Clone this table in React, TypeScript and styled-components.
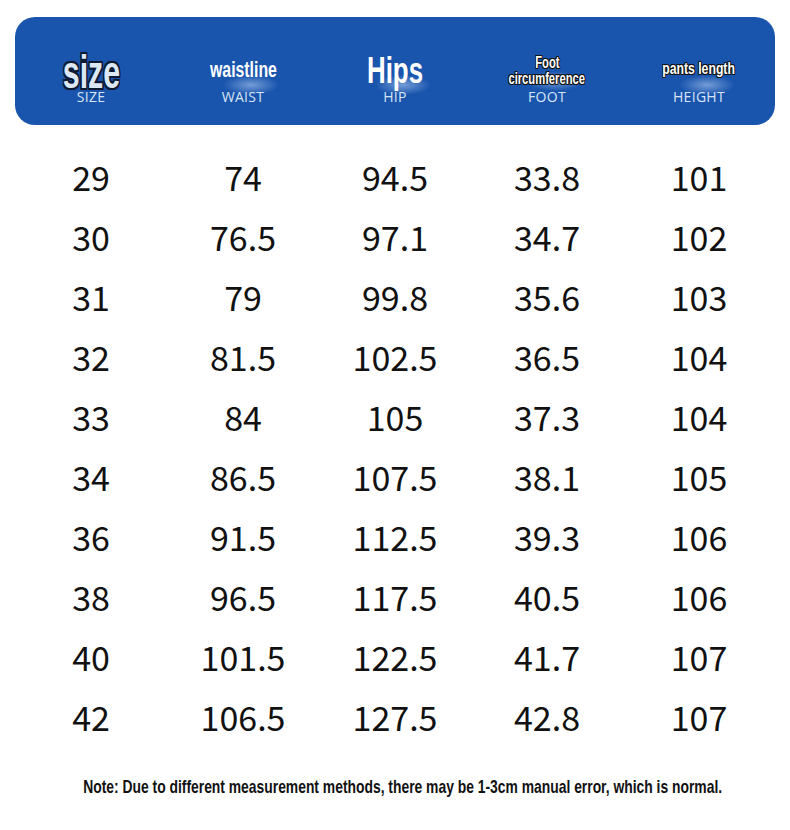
import React from "react";
import styled, { createGlobalStyle } from "styled-components";

const Global = createGlobalStyle`
  html, body { margin: 0; padding: 0; background: #ffffff; overflow: hidden; }
  body { font-family: "Noto Sans CJK SC", "Noto Sans", sans-serif; }
`;

const Page = styled.div`
  width: 790px;
  height: 830px;
  padding: 17px 15px 0;
  box-sizing: border-box;
  display: flex;
  flex-direction: column;
  overflow: hidden;
`;

const Header = styled.div`
  height: 108px;
  border-radius: 20px;
  background: #1a55ad;
  display: grid;
  grid-template-columns: repeat(5, 1fr);
`;

const HeadCell = styled.div`
  position: relative;
  display: flex;
  flex-direction: column;
  align-items: center;
  justify-content: flex-end;
  padding-bottom: 20px;
`;

const Condensed = styled.span<{ $size: number; $outline?: boolean; $mb?: number; $sx?: number }>`
  display: inline-block;
  font-family: "Liberation Sans", sans-serif;
  font-weight: 700;
  font-size: ${(p) => p.$size}px;
  line-height: 1;
  color: #ffffff;
  transform: scaleX(${(p) => p.$sx ?? 0.72});
  white-space: nowrap;
  margin-bottom: ${(p) => p.$mb ?? 0}px;
  text-shadow: ${(p) =>
    p.$outline
      ? "-1px -1px 0 #111, 1px -1px 0 #111, -1px 1px 0 #111, 1px 1px 0 #111, 0 1px 0 #111, 0 -1px 0 #111, 1px 0 0 #111, -1px 0 0 #111"
      : "none"};
`;

const BigSize = styled.span`
  display: inline-block;
  font-family: "Liberation Sans", sans-serif;
  font-weight: 700;
  font-size: 46px;
  line-height: 0.8;
  color: #dde8f6;
  transform: scaleX(0.66);
  margin-bottom: -2px;
  position: relative;
  z-index: 1;
  text-shadow: -2px -2px 0 #0e1a33, 2px -2px 0 #0e1a33, -2px 2px 0 #0e1a33, 2px 2px 0 #0e1a33,
    0 2px 0 #0e1a33, 0 -2px 0 #0e1a33, 2px 0 0 #0e1a33, -2px 0 0 #0e1a33;
`;

const Sub = styled.span`
  font-family: "Open Sans", "Noto Sans", sans-serif;
  font-size: 14px;
  line-height: 16px;
  color: #d8e4f4;
  letter-spacing: 0.3px;
`;

const Glow = styled.div<{ $top: number }>`
  position: absolute;
  left: 50%;
  top: ${(p) => p.$top}px;
  width: 56px;
  height: 20px;
  margin-left: -20px;
  border-radius: 50%;
  background: radial-gradient(ellipse at center, rgba(190, 215, 250, 0.55), rgba(190, 215, 250, 0) 70%);
  pointer-events: none;
`;

const Body = styled.div`
  margin-top: 22px;
  display: flex;
  flex-direction: column;
`;

const Row = styled.div`
  height: 60px;
  display: grid;
  grid-template-columns: repeat(5, 1fr);
  align-items: center;
`;

const Cell = styled.div`
  text-align: center;
  font-family: "Noto Sans CJK SC", "Noto Sans", sans-serif;
  font-size: 34px;
  line-height: 1;
  color: #111111;
`;

const Note = styled.div`
  margin-top: 29px;
  padding-left: 16px;
  display: flex;
  justify-content: center;
`;

const NoteText = styled.span`
  flex: none;
  display: inline-block;
  font-family: "Liberation Sans", sans-serif;
  font-weight: 700;
  font-size: 19px;
  color: #111111;
  transform: scaleX(0.73);
  white-space: nowrap;
`;

const data: string[][] = [
  ["29", "74", "94.5", "33.8", "101"],
  ["30", "76.5", "97.1", "34.7", "102"],
  ["31", "79", "99.8", "35.6", "103"],
  ["32", "81.5", "102.5", "36.5", "104"],
  ["33", "84", "105", "37.3", "104"],
  ["34", "86.5", "107.5", "38.1", "105"],
  ["36", "91.5", "112.5", "39.3", "106"],
  ["38", "96.5", "117.5", "40.5", "106"],
  ["40", "101.5", "122.5", "41.7", "107"],
  ["42", "106.5", "127.5", "42.8", "107"],
];

export default function App() {
  return (
    <>
      <Global />
      <Page>
        <Header>
          <HeadCell>
            <BigSize>size</BigSize>
            <Sub>SIZE</Sub>
          </HeadCell>
          <HeadCell>
            <Glow $top={58} />
            <Condensed $size={22} $mb={8}>waistline</Condensed>
            <Sub>WAIST</Sub>
          </HeadCell>
          <HeadCell>
            <Glow $top={58} />
            <Condensed $size={36} $mb={0}>Hips</Condensed>
            <Sub>HIP</Sub>
          </HeadCell>
          <HeadCell>
            <Glow $top={54} />
            <Condensed $size={16} $outline $sx={0.7}>Foot</Condensed>
            <Condensed $size={16} $outline $sx={0.7} $mb={2}>circumference</Condensed>
            <Sub>FOOT</Sub>
          </HeadCell>
          <HeadCell>
            <Glow $top={58} />
            <Condensed $size={17} $outline $sx={0.72} $mb={12}>pants length</Condensed>
            <Sub>HEIGHT</Sub>
          </HeadCell>
        </Header>
        <Body>
          {data.map((r, i) => (
            <Row key={i}>
              {r.map((v, j) => (
                <Cell key={j}>{v}</Cell>
              ))}
            </Row>
          ))}
        </Body>
        <Note>
          <NoteText>
            Note: Due to different measurement methods, there may be 1-3cm manual error, which is normal.
          </NoteText>
        </Note>
      </Page>
    </>
  );
}
